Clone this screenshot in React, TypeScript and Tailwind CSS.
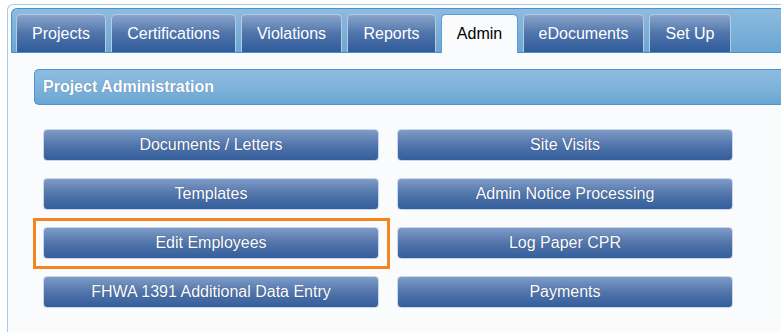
import React from "react";

const tabs = [
  { label: "Projects", w: "w-[90px]" },
  { label: "Certifications", w: "w-[125px]" },
  { label: "Violations", w: "w-[101px]" },
  { label: "Reports", w: "w-[89px]" },
  { label: "Admin", w: "w-[77px]", active: true },
  { label: "eDocuments", w: "w-[121px]" },
  { label: "Set Up", w: "w-[82px]" },
];

const leftButtons = [
  "Documents / Letters",
  "Templates",
  "Edit Employees",
  "FHWA 1391 Additional Data Entry",
];

const rightButtons = [
  "Site Visits",
  "Admin Notice Processing",
  "Log Paper CPR",
  "Payments",
];

const AdminButton = ({ label }: { label: string }) => (
  <button className="w-[336px] h-[32px] rounded-[4px] border border-[#c9d7ea] bg-gradient-to-b from-[#7f9cc7] via-[#5275ab] to-[#335e9b] text-white text-[16px] leading-none [text-shadow:0_0_1px_rgba(20,40,80,0.6)]">
    {label}
  </button>
);

const App = () => {
  return (
    <div className="w-[781px] h-[332px] overflow-hidden bg-white pt-[4px] pl-[7px] font-['Liberation_Sans',Arial,sans-serif]">
      <div className="h-full border-l border-t border-[#a9c9e6] rounded-tl-[6px] bg-[#f9fbfc] pt-[3px] pl-[3px]">
        {/* tab strip */}
        <div className="h-[45px] flex items-end gap-[5px] pl-[4px] border-l border-t border-b border-[#4a91d2] rounded-tl-[6px] bg-gradient-to-b from-[#8dbbe0] to-[#6aa7d2]">
          {tabs.map((tab) =>
            tab.active ? (
              <div
                key={tab.label}
                className={`${tab.w} h-[39px] -mb-[1px] flex items-center justify-center rounded-t-[5px] border-x border-t border-[#5c9cd8] bg-[#f9fbfc] text-black text-[16px]`}
              >
                {tab.label}
              </div>
            ) : (
              <div
                key={tab.label}
                className={`${tab.w} h-[38px] flex items-center justify-center rounded-t-[5px] border-x border-t border-[#b8c9e2] bg-gradient-to-b from-[#8aa5cb] via-[#4f74ab] to-[#2f5c9b] text-white text-[16px]`}
              >
                {tab.label}
              </div>
            )
          )}
        </div>

        {/* section */}
        <div className="pl-[23px] pt-[16px]">
          <div className="h-[36px] flex items-center pl-[8px] border-l border-y border-[#4b93d4] rounded-l-[5px] bg-gradient-to-b from-[#8ebce0] via-[#80b3db] to-[#68a6d2] text-white font-bold text-[16px] [text-shadow:0_0_1px_rgba(30,70,120,0.6)]">
            Project Administration
          </div>

          <div className="pl-[9px] pt-[24px] flex gap-[18px]">
            <div className="flex flex-col gap-[17px]">
              {leftButtons.map((label) =>
                label === "Edit Employees" ? (
                  <div key={label} className="relative">
                    <AdminButton label={label} />
                    <div className="absolute -left-[10px] -right-[11px] -top-[9px] -bottom-[10px] border-[3px] border-[#f5841f] pointer-events-none" />
                  </div>
                ) : (
                  <AdminButton key={label} label={label} />
                )
              )}
            </div>
            <div className="flex flex-col gap-[17px]">
              {rightButtons.map((label) => (
                <AdminButton key={label} label={label} />
              ))}
            </div>
          </div>
        </div>
      </div>
    </div>
  );
};

export default App;
